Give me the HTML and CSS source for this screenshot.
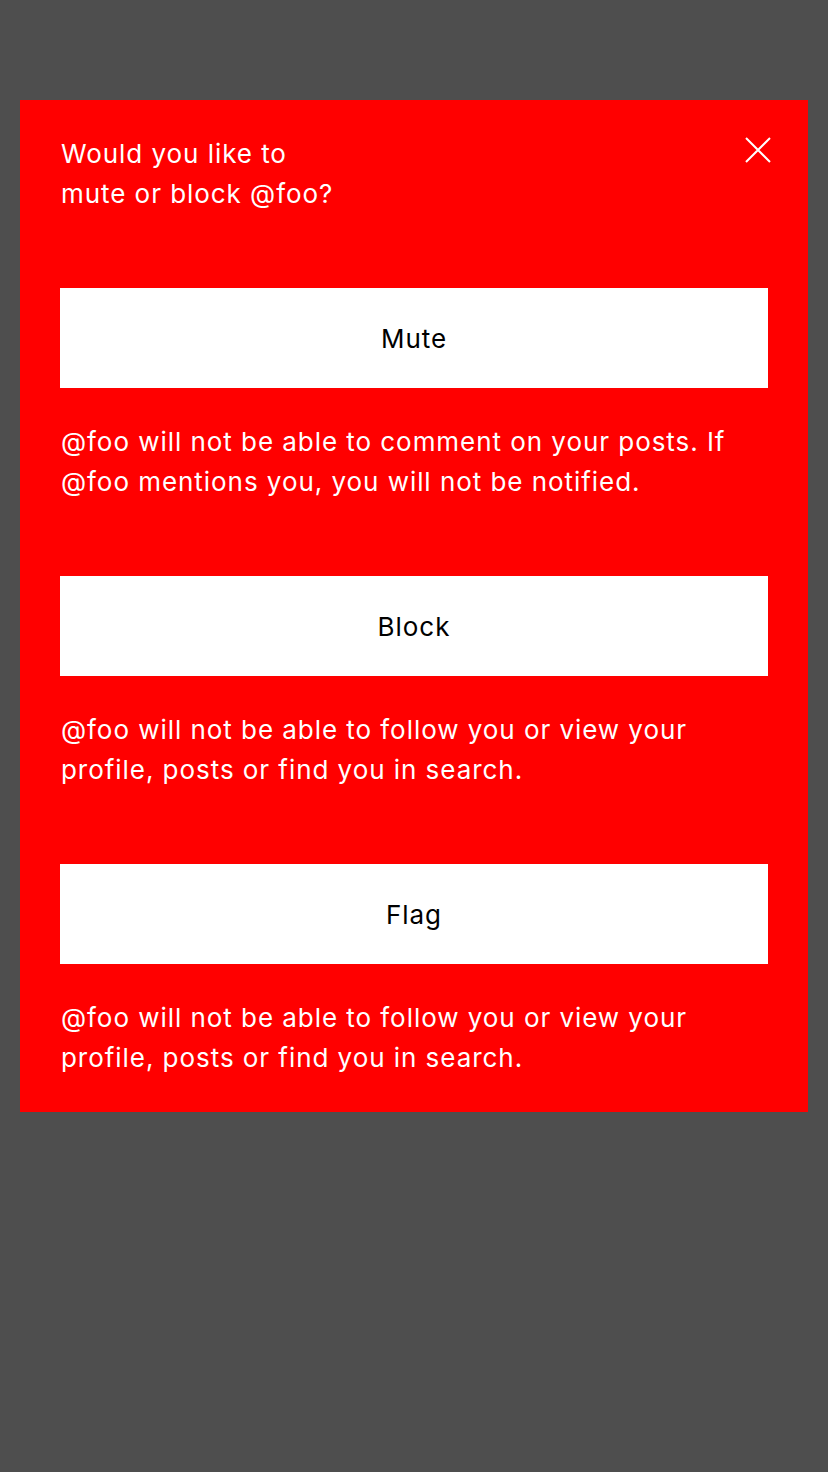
FILE: index.html
```html
<!DOCTYPE html>
<html lang="en">
<head>
<meta charset="utf-8">
<title>Mute or block</title>
<link rel="stylesheet" href="styles.css">
</head>
<body>
<div class="page">
  <div class="modal">
    <div class="modal-head">
      <h1 class="title">Would you like to<br>mute or block @foo?</h1>
      <button class="close" aria-label="Close">
        <svg width="26" height="26" viewBox="0 0 26 26"><path d="M1 1L25 25M25 1L1 25" stroke="#fff" stroke-width="2" fill="none"/></svg>
      </button>
    </div>
    <div class="option">
      <button class="action">Mute</button>
      <p class="desc">@foo will not be able to comment on your posts. If @foo mentions you, you will not be notified.</p>
    </div>
    <div class="option">
      <button class="action">Block</button>
      <p class="desc">@foo will not be able to follow you or view your profile, posts or find you in search.</p>
    </div>
    <div class="option">
      <button class="action">Flag</button>
      <p class="desc">@foo will not be able to follow you or view your profile, posts or find you in search.</p>
    </div>
  </div>
</div>
</body>
</html>
```
FILE: styles.css
```css
html, body {
  margin: 0;
  padding: 0;
  background: #4e4e4e;
}
body {
  font-family: "Inter", "Liberation Sans", Arial, sans-serif;
  font-size: 26px;
  line-height: 40px;
  letter-spacing: 0.95px;
  color: #fff;
}
.page {
  width: 828px;
  height: 1472px;
  padding: 100px 20px 0;
  box-sizing: border-box;
}
.modal {
  background: #ff0000;
  padding: 34px 40px;
  display: flex;
  flex-direction: column;
  gap: 74px;
}
.modal-head {
  display: flex;
  justify-content: space-between;
  align-items: flex-start;
}
.title {
  margin: 0 0 0 1px;
  font-size: 26px;
  font-weight: normal;
  line-height: 40px;
}
.close {
  background: none;
  border: 0;
  padding: 0;
  margin: 3px -3px 0 0;
  width: 26px;
  height: 26px;
  cursor: pointer;
}
.close svg { display: block; }
.option {
  display: flex;
  flex-direction: column;
  gap: 34px;
}
.action {
  display: block;
  width: 100%;
  height: 100px;
  border: 0;
  background: #fff;
  color: #000;
  font-family: inherit;
  font-size: 26px;
  letter-spacing: 0.95px;
  padding: 0;
}
.desc {
  margin: 0 0 0 1px;
}
```
